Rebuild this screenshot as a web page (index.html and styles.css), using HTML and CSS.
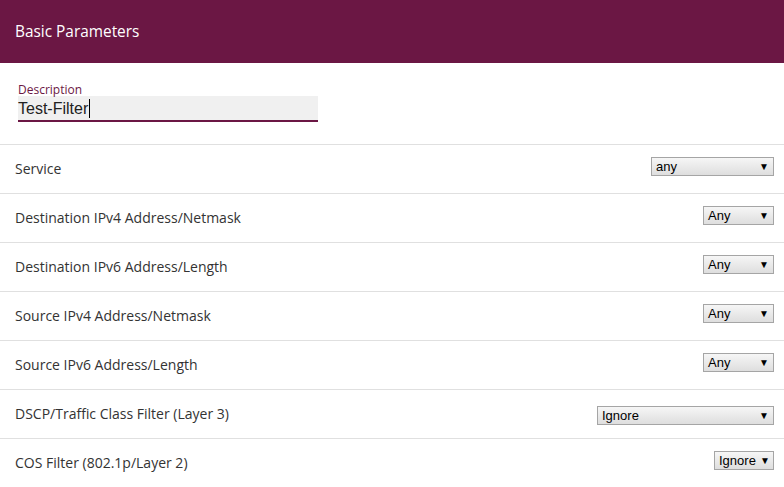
FILE: index.html
```html
<!DOCTYPE html>
<html>
<head>
<meta charset="utf-8">
<link rel="stylesheet" href="styles.css">
</head>
<body>
<div class="panel">
  <div class="header">Basic Parameters</div>
  <div class="desc">
    <div class="desc-label">Description</div>
    <div class="desc-input">Test-Filter<span class="caret"></span></div>
  </div>
  <div class="row"><span class="label">Service</span><div class="sel w-any">any<span class="arrow">▼</span></div></div>
  <div class="row"><span class="label">Destination IPv4 Address/Netmask</span><div class="sel w-Any">Any<span class="arrow">▼</span></div></div>
  <div class="row"><span class="label">Destination IPv6 Address/Length</span><div class="sel w-Any">Any<span class="arrow">▼</span></div></div>
  <div class="row"><span class="label">Source IPv4 Address/Netmask</span><div class="sel w-Any">Any<span class="arrow">▼</span></div></div>
  <div class="row"><span class="label">Source IPv6 Address/Length</span><div class="sel w-Any">Any<span class="arrow">▼</span></div></div>
  <div class="row"><span class="label">DSCP/Traffic Class Filter (Layer 3)</span><div class="sel w-ign sel-low">Ignore<span class="arrow">▼</span></div></div>
  <div class="row"><span class="label">COS Filter (802.1p/Layer 2)</span><div class="sel w-ign-s">Ignore<span class="arrow">▼</span></div></div>
</div>
</body>
</html>
```
FILE: styles.css
```css
html, body {
  margin: 0;
  padding: 0;
  background: #ffffff;
}
.panel {
  width: 784px;
  font-family: "Open Sans", "DejaVu Sans", sans-serif;
}
.header {
  height: 63px;
  background: #6b1744;
  color: #ffffff;
  font-size: 15.4px;
  display: flex;
  align-items: center;
  padding-left: 15px;
}
.desc {
  padding: 21px 18px 22px 18px;
}
.desc-label {
  font-size: 12px;
  line-height: 12px;
  height: 12px;
  color: #6b1744;
}
.desc-input {
  width: 300px;
  height: 24px;
  background: #f0f0f0;
  border-bottom: 2px solid #6b1744;
  font-family: "Liberation Sans", Arial, sans-serif;
  font-size: 16px;
  line-height: 24px;
  color: #222222;
  display: flex;
  align-items: center;
  padding-top: 1px;
  box-sizing: border-box;
  height: 26px;
}
.caret {
  display: inline-block;
  width: 1px;
  height: 19px;
  background: #000000;
  margin-left: 1px;
}
.row {
  border-top: 1px solid #e0e0e0;
  height: 48px;
  display: flex;
  align-items: center;
  justify-content: space-between;
  padding: 0 10px 0 15px;
}
.label {
  font-size: 14px;
  color: #333333;
  padding-bottom: 2px;
}
.sel {
  box-sizing: border-box;
  height: 19px;
  border: 1px solid #a5a5a5;
  background: linear-gradient(#f6f6f6, #dedede);
  font-family: "Liberation Sans", Arial, sans-serif;
  font-size: 13px;
  color: #000000;
  display: flex;
  align-items: center;
  justify-content: space-between;
  padding: 0 4px 0 4px;
  align-self: flex-start;
  margin-top: 12px;
}
.sel-low {
  margin-top: 16px;
}
.arrow {
  font-size: 10px;
  color: #000000;
}
.w-any { width: 123px; }
.w-Any { width: 71px; }
.w-ign { width: 177px; }
.w-ign-s { width: 60px; padding: 0 3px 0 4px; }
```
